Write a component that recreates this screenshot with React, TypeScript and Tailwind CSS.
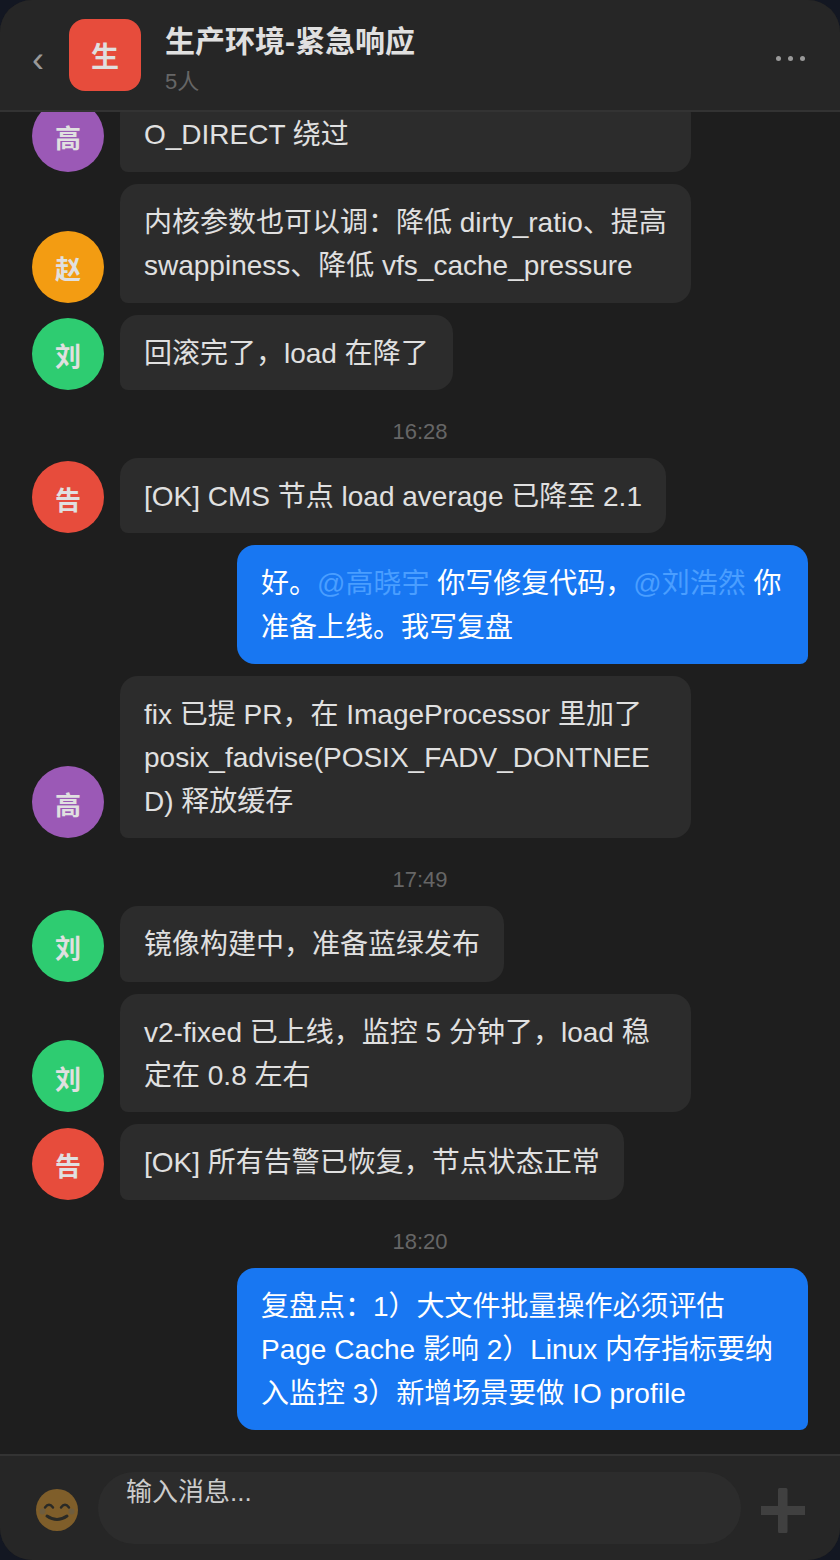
const FONT = "font-['Liberation_Sans','Noto_Sans_CJK_SC',sans-serif]";

type Msg =
  | { kind: "time"; text: string }
  | { kind: "in"; who: string; color: string; text: string; wide?: boolean }
  | { kind: "out"; text: React.ReactNode };

const messages: Msg[] = [
  { kind: "in", who: "高", color: "bg-[#9b59b6]", text: "O_DIRECT 绕过", wide: true },
  { kind: "in", who: "赵", color: "bg-[#f39c12]", text: "内核参数也可以调：降低 dirty_ratio、提高 swappiness、降低 vfs_cache_pressure" },
  { kind: "in", who: "刘", color: "bg-[#2ecc71]", text: "回滚完了，load 在降了" },
  { kind: "time", text: "16:28" },
  { kind: "in", who: "告", color: "bg-[#e74c3c]", text: "[OK] CMS 节点 load average 已降至 2.1" },
  {
    kind: "out",
    text: (
      <>
        好。<span className="text-[#4a9eff]">@高晓宇</span> 你写修复代码，<span className="text-[#4a9eff]">@刘浩然</span> 你准备上线。我写复盘
      </>
    ),
  },
  { kind: "in", who: "高", color: "bg-[#9b59b6]", text: "fix 已提 PR，在 ImageProcessor 里加了 posix_fadvise(POSIX_FADV_DONTNEED) 释放缓存" },
  { kind: "time", text: "17:49" },
  { kind: "in", who: "刘", color: "bg-[#2ecc71]", text: "镜像构建中，准备蓝绿发布" },
  { kind: "in", who: "刘", color: "bg-[#2ecc71]", text: "v2-fixed 已上线，监控 5 分钟了，load 稳定在 0.8 左右" },
  { kind: "in", who: "告", color: "bg-[#e74c3c]", text: "[OK] 所有告警已恢复，节点状态正常" },
  { kind: "time", text: "18:20" },
  { kind: "out", text: "复盘点：1）大文件批量操作必须评估 Page Cache 影响 2）Linux 内存指标要纳入监控 3）新增场景要做 IO profile" },
];

export default function App() {
  return (
    <div className={`w-[840px] h-[1560px] bg-[#131722] ${FONT}`}>
      <div className="w-full h-full rounded-[32px] overflow-hidden bg-[#1e1e1e] flex flex-col">
        {/* Header */}
        <header className="shrink-0 h-[112px] bg-[#262626] border-b-2 border-[#333333] flex items-center px-8 z-10">
          <span className="w-[37px] mt-[10px] text-[36px] leading-none text-[#999999]">‹</span>
          <div className="w-[72px] h-[72px] pt-[6px] rounded-2xl bg-[#e74c3c] text-[#e0e0e0] text-[28px] font-bold flex items-center justify-center">
            生
          </div>
          <div className="ml-6 flex-1 pt-[6px]">
            <div className="text-[30px] leading-[46px] font-bold text-[#e0e0e0]">生产环境-紧急响应</div>
            <div className="text-[22px] leading-[30px] mt-[2px] text-[#666666]">5人</div>
          </div>
          <div className="flex gap-[7px] mt-[7px] mr-[3px]">
            <span className="w-[5px] h-[5px] rounded-full bg-[#999999]" />
            <span className="w-[5px] h-[5px] rounded-full bg-[#999999]" />
            <span className="w-[5px] h-[5px] rounded-full bg-[#999999]" />
          </div>
        </header>

        {/* Messages */}
        <main className="flex-1 min-h-0 overflow-hidden flex flex-col justify-end gap-3 px-8 pb-6">
          {messages.map((m, i) => {
            if (m.kind === "time") {
              return (
                <div key={i} className="shrink-0 text-center text-[22px] leading-[28px] text-[#666666] mt-4">
                  {m.text}
                </div>
              );
            }
            if (m.kind === "out") {
              return (
                <div key={i} className="shrink-0 flex justify-end">
                  <div className="w-[571px] rounded-[18px] rounded-br-[8px] bg-[#1877f2] text-white px-6 pt-[17px] pb-[15px] text-[28px] leading-[1.55] break-words">
                    {m.text}
                  </div>
                </div>
              );
            }
            return (
              <div key={i} className="shrink-0 flex items-end gap-4">
                <div className={`shrink-0 w-[72px] h-[72px] pt-2 rounded-full ${m.color} text-[#e0e0e0] text-[26px] font-bold flex items-center justify-center`}>
                  {m.who}
                </div>
                <div className={`${m.wide ? "w-[571px]" : "max-w-[571px]"} rounded-[18px] rounded-bl-[8px] bg-[#2c2c2c] text-[#e0e0e0] px-6 pt-[17px] pb-[15px] text-[28px] leading-[1.55] break-words`}>
                  {m.text}
                </div>
              </div>
            );
          })}
        </main>

        {/* Input bar */}
        <footer className="shrink-0 h-[106px] bg-[#262626] border-t-2 border-[#333333] flex items-center pl-[36px]">
          <svg viewBox="0 0 42 42" className="w-[42px] h-[42px] mt-[4px] shrink-0">
            <circle cx="21" cy="21" r="21" fill="#7f5e2a" />
            <path d="M9 18.500q4-5.500 8 0" fill="none" stroke="#2a2a26" strokeWidth="2.400" strokeLinecap="round" />
            <path d="M25 18.500q4-5.500 8 0" fill="none" stroke="#2a2a26" strokeWidth="2.400" strokeLinecap="round" />
            <path d="M11 27q10 7 20 0" fill="none" stroke="#2a2a26" strokeWidth="3" strokeLinecap="round" />
            <circle cx="6.500" cy="22.500" r="3" fill="#6f5d3e" />
            <circle cx="35.500" cy="22.500" r="3" fill="#6f5d3e" />
          </svg>
          <div className="ml-[20px] w-[643px] h-[72px] rounded-[36px] bg-[#2c2c2c] px-7 text-[26px] leading-[40px] text-[#cccccc] shrink-0">
            输入消息...
          </div>
          <svg viewBox="0 0 44 45" className="ml-[20px] mt-[5px] w-[44px] h-[45px] shrink-0">
            <path d="M17 1.500a1.500 1.500 0 0 1 1.500-1.500h6.500a1.500 1.500 0 0 1 1.500 1.500V18H44v9H26.500v16.500a1.500 1.500 0 0 1-1.500 1.500h-6.500a1.500 1.500 0 0 1-1.500-1.500V27H0v-9h17z" fill="#404040" />
          </svg>
        </footer>
      </div>
    </div>
  );
}
